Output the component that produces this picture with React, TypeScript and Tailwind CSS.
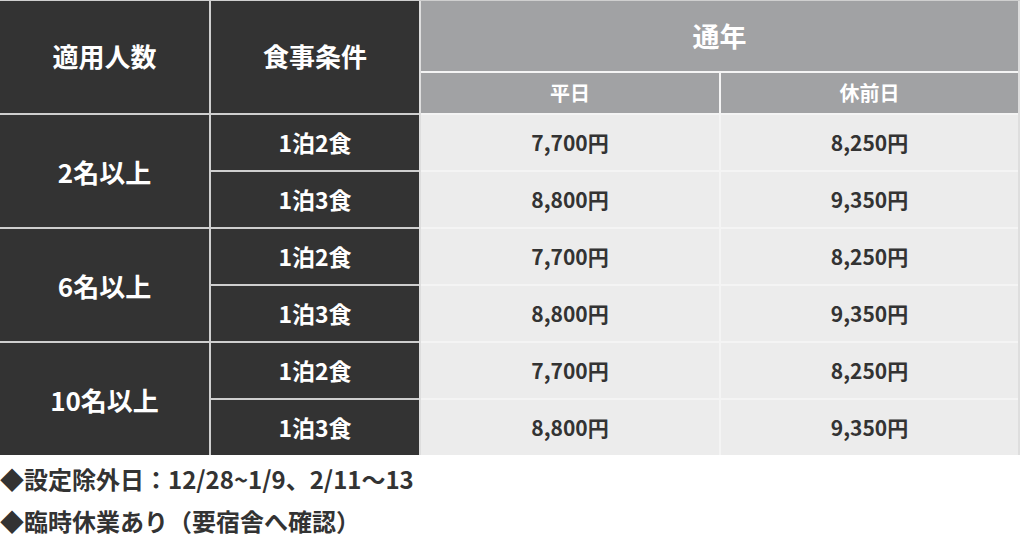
const rows = [
  { people: "2名以上", plans: [["1泊2食", "7,700円", "8,250円"], ["1泊3食", "8,800円", "9,350円"]] },
  { people: "6名以上", plans: [["1泊2食", "7,700円", "8,250円"], ["1泊3食", "8,800円", "9,350円"]] },
  { people: "10名以上", plans: [["1泊2食", "7,700円", "8,250円"], ["1泊3食", "8,800円", "9,350円"]] },
];

const font = { fontFamily: '"Noto Sans CJK JP", "Noto Sans", sans-serif' };

export default function App() {
  return (
    <div className="w-[1020px] h-[546px] bg-white font-bold" style={font}>
      <div className="flex w-[1020px] border-t border-[#cfcfcf]">
        {/* left: dark columns */}
        <div className="grid w-[419px] grid-cols-[209px_208px] grid-rows-[112px_repeat(6,55px)] gap-[2px] bg-[#cfcfcf] text-white">
          <div className="flex items-center justify-center pb-[3px] bg-[#333333] text-[26px]">適用人数</div>
          <div className="flex items-center justify-center pb-[3px] bg-[#333333] text-[26px]">食事条件</div>
          {rows.map((r) => (
            <>
              <div key={r.people} className="row-span-2 flex items-center justify-center bg-[#333333] text-[26px]">
                {r.people}
              </div>
              {r.plans.map((p, i) => (
                <div key={r.people + i} className="flex items-center justify-center bg-[#333333] text-[23px]">
                  {p[0]}
                </div>
              ))}
            </>
          ))}
        </div>
        <div className="w-[2px] bg-[#dedede]" />
        {/* right: prices */}
        <div className="grid w-[597px] grid-cols-[298px_297px] grid-rows-[70px_40px_repeat(6,55px)] gap-[2px] bg-[#f4f4f4]">
          <div className="col-span-2 flex items-center justify-center bg-[#a1a2a4] text-[27px] text-white">通年</div>
          <div className="flex items-center justify-center bg-[#a1a2a4] text-[20px] text-white">平日</div>
          <div className="flex items-center justify-center bg-[#a1a2a4] text-[20px] text-white">休前日</div>
          {rows.flatMap((r) =>
            r.plans.map((p, i) => (
              <>
                <div key={r.people + i + "a"} className="flex items-center justify-center bg-[#ececec] text-[21px] text-[#333333]">
                  {p[1]}
                </div>
                <div key={r.people + i + "b"} className="flex items-center justify-center bg-[#ececec] text-[21px] text-[#333333]">
                  {p[2]}
                </div>
              </>
            ))
          )}
        </div>
        <div className="w-[2px] bg-[#dedede]" />
      </div>
      <div className="mt-[8px] flex flex-col gap-[10px] text-[24px] leading-[32px] text-[#333333]">
        <p>◆設定除外日：12/28~1/9、2/11〜13</p>
        <p>◆臨時休業あり（要宿舎へ確認）</p>
      </div>
    </div>
  );
}
